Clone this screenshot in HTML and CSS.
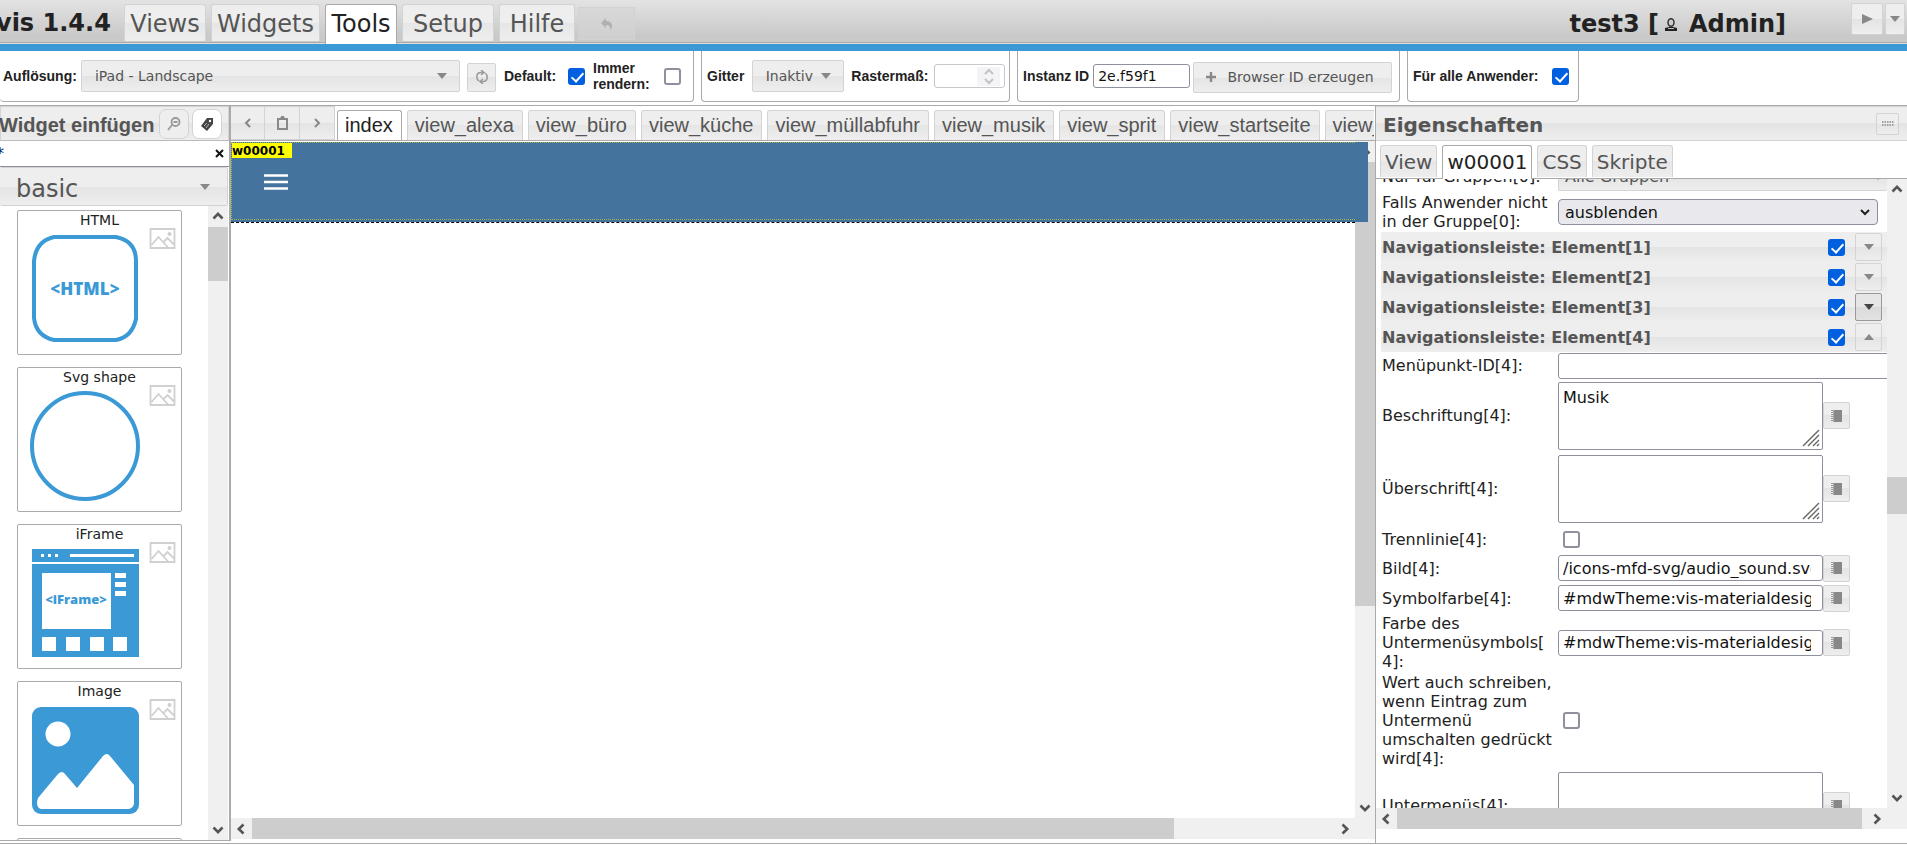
FILE: index.html
```html
<!DOCTYPE html>
<html lang="de">
<head>
<meta charset="utf-8">
<title>vis 1.4.4</title>
<link rel="stylesheet" href="styles.css">
</head>
<body>
<svg class="defs" aria-hidden="true">
  <symbol id="up" viewBox="0 0 12 12"><path d="M1.500 8.500 6 3.800l4.500 4.700" fill="none" stroke="#555" stroke-width="2.600"/></symbol>
  <symbol id="down" viewBox="0 0 12 12"><path d="M1.500 3.500 6 8.200l4.500-4.700" fill="none" stroke="#555" stroke-width="2.600"/></symbol>
  <symbol id="left" viewBox="0 0 12 12"><path d="M8.500 1.500 3.800 6l4.700 4.500" fill="none" stroke="#555" stroke-width="2.600"/></symbol>
  <symbol id="right" viewBox="0 0 12 12"><path d="M3.500 1.500 8.200 6l-4.700 4.500" fill="none" stroke="#555" stroke-width="2.600"/></symbol>
  <symbol id="tri" viewBox="0 0 10 6"><path d="M0 0h10L5 6z" fill="currentColor"/></symbol>
  <symbol id="triup" viewBox="0 0 10 6"><path d="M0 6h10L5 0z" fill="currentColor"/></symbol>
  <symbol id="pic" viewBox="0 0 26 21"><g fill="none" stroke="#d0d0d0" stroke-width="1.800"><path d="M1 1h24v19H1zM2 17l7-8 10 11M14 14l4-4 7 7"/></g><circle cx="20" cy="6" r="2" fill="#d0d0d0"/></symbol>
  <symbol id="book" viewBox="0 0 12 12"><path d="M3 0h8v12H3z" fill="#888"/><path d="M1 0v12" stroke="#999" stroke-width="2" stroke-dasharray="1 1"/><path d="M2 0h1v12H2z" fill="#aaa"/></symbol>
  <symbol id="grip" viewBox="0 0 18 18"><path d="M1 17 17 1M6 17 17 6M11 17l6-6M15 17l2-2" stroke="#666" stroke-width="1.400"/></symbol>
</svg>

<header class="menubar">
  <h1 class="brand">vis 1.4.4</h1>
  <nav class="menu">
    <button class="tab w-views">Views</button>
    <button class="tab w-widgets">Widgets</button>
    <button class="tab w-tools active">Tools</button>
    <button class="tab w-setup">Setup</button>
    <button class="tab w-hilfe">Hilfe</button>
  </nav>
  <button class="undo" aria-label="Undo" disabled><svg width="12" height="12" viewBox="0 0 12 12"><path d="M5 0v3c4 0 6 2 6 5 0 2-1 3-2 4 1-4-1-5-4-5v3L0 5z" fill="#b0b0b0"/></svg></button>
  <div class="project">test3 [<svg class="user" width="14" height="14" viewBox="0 0 14 14"><path d="M1 13v-3l4-1h4l4 1v3z" fill="#222"/><ellipse cx="7" cy="4.500" rx="3" ry="3.800" fill="#ccc" stroke="#333" stroke-width="1.500"/><path d="M4 10.500h6" stroke="#bbb"/></svg>Admin]</div>
  <div class="play">
    <button class="btn run" aria-label="Start"><svg width="11" height="10" viewBox="0 0 11 10"><path d="M0 0l11 5-11 5z" fill="#888"/></svg></button>
    <button class="btn more" aria-label="Mehr"><svg width="10" height="6"><use href="#tri"/></svg></button>
  </div>
</header>

<section class="toolbar">
  <div class="box first">
    <label for="res">Auflösung:</label>
    <button id="res" class="btn pick">iPad - Landscape<svg width="10" height="6"><use href="#tri"/></svg></button>
    <button class="btn swap" aria-label="Drehen"><svg width="12" height="14" viewBox="0 0 12 14" fill="none" stroke="#999" stroke-width="1.500"><path d="M3 11C0 9 0 3 4 2.500h3M5 0l3 2.500L5 5M9 3c3 2 3 8-1 8.500H5M7 9l-3 2.500L7 14"/></svg></button>
    <label for="def" class="lab-def">Default:</label><input id="def" type="checkbox" class="check" checked>
    <label for="ren" class="lab-ren">Immer rendern:</label><input id="ren" type="checkbox" class="check">
  </div>
  <div class="box second">
    <label for="grid">Gitter</label>
    <button id="grid" class="btn inactive">Inaktiv<svg width="10" height="6"><use href="#tri"/></svg></button>
    <label for="raster">Rastermaß:</label>
    <span class="spin"><input id="raster" type="text" disabled><svg width="23" height="19" viewBox="0 0 23 19"><path d="M0 0h23v19H0z" fill="#f4f4f6"/><path d="M8 7l4-4 4 4M8 12l4 4 4-4" fill="none" stroke="#c2c2ca" stroke-width="2"/></svg></span>
  </div>
  <div class="box third">
    <label for="inst">Instanz ID</label>
    <input id="inst" type="text" class="field inst" value="2e.f59f1">
    <button class="btn create"><svg width="10" height="10" viewBox="0 0 10 10"><path d="M5 0v10M0 5h10" stroke="#888" stroke-width="2.400"/></svg>Browser ID erzeugen</button>
  </div>
  <div class="box fourth">
    <label for="all">Für alle Anwender:</label><input id="all" type="checkbox" class="check" checked>
  </div>
</section>

<main class="work">
  <aside class="palette">
    <div class="head">
      <h2>Widget einfügen</h2>
      <button class="round" aria-label="Suche"><svg width="14" height="14" viewBox="0 0 14 14" fill="none" stroke="#999" stroke-width="1.800"><circle cx="8.500" cy="5" r="4"/><path d="M5 8l-4 5M6.500 5h4"/></svg></button>
      <button class="round on" aria-label="Filter"><svg width="14" height="14" viewBox="0 0 14 14"><path d="M7 1h6v6l-6 7-6-5z" fill="#444"/><circle cx="10" cy="4" r="1.200" fill="#fff"/><path d="M4 9l3-3M6 11l3-4" stroke="#bbb"/></svg></button>
    </div>
    <div class="search"><input type="text" value="*" aria-label="Filter"><button aria-label="Leeren"><svg width="9" height="9" viewBox="0 0 9 9"><path d="M1 1l7 7M8 1L1 8" stroke="#111" stroke-width="2"/></svg></button></div>
    <button class="btn group">basic<svg width="10" height="6"><use href="#tri"/></svg></button>
    <div class="scroller">
      <div class="cards">
        <article class="card"><h3>HTML</h3><svg class="art" viewBox="0 0 110 110"><path d="M24 3h62q20 4 20 24v58q-4 18-20 21H24Q6 102 4 84V27Q6 7 24 3z" fill="none" stroke="#3b99d6" stroke-width="4"/><text x="55" y="61" class="t-html">&lt;HTML&gt;</text></svg><svg class="pic"><use href="#pic"/></svg></article>
        <article class="card"><h3>Svg shape</h3><svg class="art" viewBox="0 0 110 110"><circle cx="55" cy="55" r="53" fill="none" stroke="#3b99d6" stroke-width="4"/></svg><svg class="pic"><use href="#pic"/></svg></article>
        <article class="card"><h3>iFrame</h3><svg class="art" viewBox="0 0 110 110"><path d="M2 1h107v13H2zM2 16h107v93H2z" fill="#3b99d6"/><path d="M12 25h69v56H12zM85 25h11v5H85zM85 34h11v5H85zM85 43h11v5H85zM12 89h14v14H12zM36 89h14v14H36zM60 89h14v14H60zM83 89h14v14H83zM40 6h64v3H40zM11 6h3v3h-3zM18 6h3v3h-3zM25 6h3v3h-3z" fill="#fff"/><text x="46" y="56" class="t-frame">&lt;iFrame&gt;</text></svg><svg class="pic"><use href="#pic"/></svg></article>
        <article class="card"><h3>Image</h3><svg class="art" viewBox="0 0 110 110"><rect x="2" y="2" width="107" height="107" rx="9" fill="#3b99d6"/><circle cx="28" cy="29" r="12.500" fill="#fff"/><path d="M8 93l20-24q4-4 7 0l12 14 26-32q4-4 7 0l24 29v19q-1 4-5 5H11q-6-2-3-11z" fill="#fff"/></svg><svg class="pic"><use href="#pic"/></svg></article>
        <article class="card"></article>
      </div>
      <div class="vbar"><svg class="ar"><use href="#up"/></svg><i class="thumb t1"></i><svg class="ar end"><use href="#down"/></svg></div>
    </div>
  </aside>

  <section class="editor">
    <div class="views">
      <div class="nav">
        <button class="btn" aria-label="Zurück"><svg width="7" height="10" viewBox="0 0 7 10"><path d="M6 1L2 5l4 4" fill="none" stroke="#888" stroke-width="2"/></svg></button>
        <button class="btn" aria-label="Ablage"><svg width="11" height="14" viewBox="0 0 11 14"><path d="M1 3h9v10H1zM3 2.500h5" fill="none" stroke="#888" stroke-width="2"/><path d="M4 0h3v2H4z" fill="#888"/></svg></button>
        <button class="btn" aria-label="Weiter"><svg width="7" height="10" viewBox="0 0 7 10"><path d="M1 1l4 4-4 4" fill="none" stroke="#888" stroke-width="2"/></svg></button>
      </div>
      <div class="vtabs">
        <button class="vtab active">index</button><button class="vtab">view_alexa</button><button class="vtab">view_büro</button><button class="vtab">view_küche</button><button class="vtab">view_müllabfuhr</button><button class="vtab">view_musik</button><button class="vtab">view_sprit</button><button class="vtab">view_startseite</button><button class="vtab">view_wetter</button>
      </div>
    </div>
    <div class="stage">
      <div class="canvas">
        <div class="navwidget">
          <span class="wid">w00001</span>
          <svg class="burger" width="24" height="16" viewBox="0 0 24 16"><path d="M0 1.500h24M0 8h24M0 14.500h24" stroke="#fff" stroke-width="2.600"/></svg>
          <span class="select-frame"></span>
        </div>
      </div>
      <div class="vbar"><svg class="ar"><use href="#up"/></svg><i class="thumb t2"></i><svg class="ar end"><use href="#down"/></svg></div>
      <div class="hbar"><svg class="ar"><use href="#left"/></svg><i class="thumb h1"></i><svg class="ar end"><use href="#right"/></svg></div>
      <div class="corner"></div>
    </div>
  </section>

  <aside class="props">
    <div class="head"><h2>Eigenschaften</h2><button class="btn dots" aria-label="Andocken"><svg width="12" height="5" viewBox="0 0 12 5"><path d="M0 1h12M0 4h12" stroke="#888" stroke-width="1.500" stroke-dasharray="1.500 1"/></svg></button></div>
    <nav class="ptabs"><button class="tab">View</button><button class="tab active">w00001</button><button class="tab">CSS</button><button class="tab">Skripte</button></nav>
    <div class="pane">
      <div class="clip">
        <table class="sheet">
          <tr class="r-grp"><td><label for="p1">Nur für Gruppen[0]:</label></td><td><button id="p1" class="btn wide">Alle Gruppen<svg width="10" height="6"><use href="#tri"/></svg></button></td></tr>
          <tr class="r-two"><td><label for="p2">Falls Anwender nicht in der Gruppe[0]:</label></td><td><span class="sel"><select id="p2"><option>ausblenden</option></select><svg width="12" height="12" viewBox="0 0 12 12"><path d="M2 4l4 4 4-4" fill="none" stroke="#222" stroke-width="2"/></svg></span></td></tr>
          <tr class="sec"><th colspan="2"><div><label for="e1">Navigationsleiste: Element[1]</label><input id="e1" type="checkbox" class="check" checked><button class="btn" aria-label="Öffnen"><svg width="10" height="6"><use href="#tri"/></svg></button></div></th></tr>
          <tr class="sec"><th colspan="2"><div><label for="e2">Navigationsleiste: Element[2]</label><input id="e2" type="checkbox" class="check" checked><button class="btn" aria-label="Öffnen"><svg width="10" height="6"><use href="#tri"/></svg></button></div></th></tr>
          <tr class="sec"><th colspan="2"><div><label for="e3">Navigationsleiste: Element[3]</label><input id="e3" type="checkbox" class="check" checked><button class="btn hover" aria-label="Öffnen"><svg width="10" height="6"><use href="#tri"/></svg></button></div></th></tr>
          <tr class="sec"><th colspan="2"><div><label for="e4">Navigationsleiste: Element[4]</label><input id="e4" type="checkbox" class="check" checked><button class="btn" aria-label="Schließen"><svg width="10" height="6"><use href="#triup"/></svg></button></div></th></tr>
          <tr class="r-id"><td><label for="p3">Menüpunkt-ID[4]:</label></td><td><input id="p3" type="text" class="field over"></td></tr>
          <tr class="r-area"><td><label for="p4">Beschriftung[4]:</label></td><td><div class="pair"><span class="area"><textarea id="p4">Musik</textarea><svg><use href="#grip"/></svg></span><button class="btn bk" aria-label="Bearbeiten"><svg width="12" height="12"><use href="#book"/></svg></button></div></td></tr>
          <tr class="r-area"><td><label for="p5">Überschrift[4]:</label></td><td><div class="pair"><span class="area"><textarea id="p5"></textarea><svg><use href="#grip"/></svg></span><button class="btn bk" aria-label="Bearbeiten"><svg width="12" height="12"><use href="#book"/></svg></button></div></td></tr>
          <tr class="r-chk"><td><label for="p6">Trennlinie[4]:</label></td><td><input id="p6" type="checkbox" class="check in"></td></tr>
          <tr class="r-one"><td><label for="p7">Bild[4]:</label></td><td><div class="pair"><input id="p7" type="text" class="field" value="/icons-mfd-svg/audio_sound.svg"><button class="btn bk" aria-label="Bearbeiten"><svg width="12" height="12"><use href="#book"/></svg></button></div></td></tr>
          <tr class="r-one"><td><label for="p8">Symbolfarbe[4]:</label></td><td><div class="pair"><input id="p8" type="text" class="field" value="#mdwTheme:vis-materialdesign"><button class="btn bk" aria-label="Bearbeiten"><svg width="12" height="12"><use href="#book"/></svg></button></div></td></tr>
          <tr class="r-three"><td><label for="p9">Farbe des Untermenüsymbols[<wbr>4]:</label></td><td><div class="pair"><input id="p9" type="text" class="field" value="#mdwTheme:vis-materialdesign"><button class="btn bk" aria-label="Bearbeiten"><svg width="12" height="12"><use href="#book"/></svg></button></div></td></tr>
          <tr class="r-five"><td><label for="p10">Wert auch schreiben, wenn Eintrag zum Untermenü umschalten gedrückt wird[4]:</label></td><td><input id="p10" type="checkbox" class="check in"></td></tr>
          <tr class="r-area"><td><label for="p11">Untermenüs[4]:</label></td><td><div class="pair"><span class="area"><textarea id="p11"></textarea><svg><use href="#grip"/></svg></span><button class="btn bk" aria-label="Bearbeiten"><svg width="12" height="12"><use href="#book"/></svg></button></div></td></tr>
        </table>
      </div>
      <div class="vbar"><svg class="ar"><use href="#up"/></svg><i class="thumb t3"></i><svg class="ar end"><use href="#down"/></svg></div>
      <div class="hbar"><svg class="ar"><use href="#left"/></svg><i class="thumb h2"></i><svg class="ar end"><use href="#right"/></svg></div>
      <div class="corner"></div>
    </div>
  </aside>
</main>
</body>
</html>
```

FILE: styles.css
```css
* { box-sizing: border-box; }
html, body { height: 100%; margin: 0; }
body {
  display: flex; flex-direction: column; overflow: hidden;
  background: #fff; color: #222;
  font: 16px/19px Verdana, "DejaVu Sans", sans-serif;
}
button, input, select, textarea { font: inherit; color: inherit; margin: 0; padding: 0; }
h1, h2, h3 { margin: 0; }
svg { display: block; flex: none; }
.defs { position: absolute; width: 0; height: 0; }

.btn {
  display: flex; align-items: center; justify-content: center;
  border: 1px solid #d3d3d3; border-radius: 2px; color: #555;
  background: linear-gradient(#eee 50%, #e4e4e4 50%, #eee);
}
.btn svg { color: #888; }
.btn.hover { border-color: #999; background: linear-gradient(#e6e6e6 50%, #dadada 50%, #e2e2e2); }
.btn.hover svg { color: #444; }
.check {
  appearance: none; position: relative; flex: none; width: 17px; height: 17px;
  border: 2px solid #8f8f9d; border-radius: 3px; background: #fff;
}
.check:checked { border-color: #0060df; background: #0060df; }
.check:checked::after {
  content: ""; position: absolute; left: 4px; top: 0; width: 5px; height: 10px;
  border: solid #fff; border-width: 0 2px 2px 0; transform: rotate(42deg);
}
.field { height: 26px; padding: 0 11px 0 4px; border: 1px solid #8f8f9d; border-radius: 3px; background: #fff; color: #111; }

/* Menu bar */
.menubar {
  flex: none; display: flex; height: 51px; padding-right: 2px;
  background: linear-gradient(#e3e3e3, #c9c9c9 36px, #cacaca 42px);
  border-bottom: 7px solid #3b99d6; box-shadow: inset 0 -1px #ddd, inset 0 -2px #aaa;
}
.brand { width: 128px; margin-left: -4px; font-size: 24px; line-height: 46px; white-space: nowrap; }
.menu { display: flex; gap: 5px; padding-top: 4px; height: 44px; }
.tab {
  border: 1px solid #d3d3d3; border-bottom: 0; border-radius: 3px 3px 0 0; color: #555;
  background: linear-gradient(#eee 50%, #e6e6e6 50%, #eee);
}
.tab.active { background: #fff; color: #222; border-color: #aaa; }
.menu .tab { height: 37px; padding-top: 2px; font-size: 24px; line-height: 35px; }
.menu .tab.active { height: 40px; padding-bottom: 3px; }
.w-views { width: 82px; }
.w-widgets { width: 109px; }
.w-tools { width: 72px; }
.w-setup { width: 92px; }
.w-hilfe { width: 76px; }
.undo {
  display: flex; align-items: center; justify-content: center; width: 57px; height: 33px;
  margin: 7px 0 0 3px; border: 1px solid #d2d2d2; background: linear-gradient(#d8d8d8, #cfcfcf);
}
.project { display: flex; align-items: center; margin-left: auto; height: 48px; padding-top: 1px; font-size: 24px; font-weight: bold; }
.user { margin: 0 11px 0 5px; }
.play { display: flex; gap: 2px; margin: 3px 0 0 65px; }
.play .btn { height: 32px; }
.run { width: 32px; }
.more { width: 20px; }

/* Toolbar */
.toolbar {
  flex: none; display: flex; gap: 7px; height: 55px; padding-bottom: 3px;
  border-bottom: 1px solid #aaa; font-size: 14px;
}
.toolbar label { font: bold 14px/16px "Liberation Sans", Arial, sans-serif; white-space: nowrap; }
.box { display: flex; align-items: center; border: 1px solid #aaa; border-top: 0; border-radius: 0 0 4px 4px; }
.first { width: 694px; padding-left: 3px; border-left: 0; }
.second { width: 309px; padding-left: 5px; }
.third { width: 383px; padding-left: 5px; }
.fourth { width: 172px; padding-left: 5px; }
.pick { flex: 1; height: 32px; margin-left: 4px; padding: 0 12px 0 13px; justify-content: space-between; }
.swap { width: 29px; height: 29px; margin: 2px 8px 0 7px; }
.lab-def { width: 64px; }
.toolbar .lab-ren { width: 71px; margin-left: 8px; white-space: normal; }
#ren { margin-right: 12px; }
.inactive { width: 92px; height: 32px; margin: 0 7px 0 8px; gap: 8px; }
.spin { display: flex; align-items: center; width: 71px; height: 24px; margin-left: auto; margin-right: 4px; border: 1px solid #c7c7ce; border-radius: 3px; }
.spin input { flex: 1; min-width: 0; height: 18px; border: 0; background: #fff; }
.spin svg { margin-right: 4px; }
.inst { width: 97px; height: 24px; margin-left: 4px; }
.create { flex: 1; height: 31px; margin: 2px 7px 0 3px; gap: 12px; padding-right: 6px; }
#all { margin-left: auto; margin-right: 9px; }

/* Work area */
.work { flex: 1; min-height: 0; display: flex; margin-bottom: 1px; border-bottom: 1px solid #aaa; }
.head {
  flex: none; display: flex; align-items: center; height: 35px;
  background: linear-gradient(#eee 50%, #e4e4e4 50%, #eee);
  border: 1px solid #d3d3d3; border-bottom: 1px solid #bbb; color: #555;
}
.ar { width: 12px; height: 12px; margin: 4px; }
.vbar, .hbar { display: flex; background: #f0f0f0; }
.vbar { flex-direction: column; width: 20px; }
.hbar { height: 21px; align-items: center; }
.vbar .end { margin-top: auto; }
.hbar .end { margin-left: auto; }
.thumb { background: #cdcdcd; flex: none; }
.t1 { height: 54px; margin-top: 1px; }
.t2 { height: 444px; margin-top: 1px; }
.t3 { height: 37px; margin-top: 278px; }
.h1 { width: 82%; height: 21px; margin-left: 1px; }
.h2 { width: 91%; height: 21px; margin-left: 1px; }

/* Palette */
.palette { flex: none; width: 231px; display: flex; flex-direction: column; border-right: 2px solid #aaa; margin-bottom: 2px; border-bottom: 1px solid #aaa; }
.palette h2 { flex: 1; margin-left: -2px; padding-top: 2px; font: bold 20px/24px "Liberation Sans", Arial, sans-serif; white-space: nowrap; }
.round { display: flex; align-items: center; justify-content: center; width: 30px; height: 30px; margin-right: 3px; border: 1px solid #d3d3d3; border-radius: 7px; background: #eee; }
.round.on { background: #fff; margin-right: 6px; }
.search { flex: none; display: flex; height: 26px; border-bottom: 1px solid #8f8f9d; }
.search input { flex: 1; min-width: 0; margin-left: -4px; border: 0; outline: 0; height: 24px; color: #0a246a; }
.search button { width: 20px; display: flex; align-items: center; justify-content: center; border: 0; background: none; }
.group { flex: none; justify-content: space-between; width: 228px; height: 39px; padding: 6px 17px 0 16px; font-size: 24px; border-left: 0; }
.group svg { margin-bottom: 6px; }
.scroller { flex: 1; min-height: 0; display: flex; justify-content: space-between; padding: 0 1px 0 17px; overflow: hidden; }
.cards { display: flex; flex-direction: column; gap: 12px; width: 165px; padding-top: 4px; }
.card { flex: none; position: relative; height: 145px; border: 1px solid #aaa; border-radius: 2px; }
.card h3 { font-size: 14px; line-height: 18px; font-weight: normal; text-align: center; }
.art { width: 110px; height: 110px; margin: 5px 0 0 12px; }
.pic { position: absolute; right: 5px; top: 17px; width: 27px; height: 21px; }
.t-html, .t-frame { font-family: "Open Sans", sans-serif; font-weight: 800; fill: #3b99d6; text-anchor: middle; }
.t-html { font-size: 17px; }
.t-frame { font-size: 13px; }

/* Editor */
.editor { flex: 1; min-width: 0; display: flex; flex-direction: column; padding-bottom: 4px; }
.views { flex: none; display: flex; height: 35px; border-bottom: 1px solid #aaa; }
.nav { display: flex; }
.nav .btn { width: 35px; height: 34px; border-radius: 0; border-left: 0; }
.nav .btn:first-child { width: 34px; }
.vtabs { display: flex; gap: 4px; margin-right: 1px; padding: 4px 0 0 2px; overflow: hidden; }
.vtab {
  flex: none; height: 30px; padding: 0 8px 2px 7px; white-space: nowrap;
  border: 1px solid #d3d3d3; border-bottom: 0; border-radius: 3px 3px 0 0; color: #555;
  background: linear-gradient(#eee 50%, #e6e6e6 50%, #eee);
  font: 20px/26px "Liberation Sans", Arial, sans-serif;
}
.vtab + .vtab { margin-left: 1px; }
.vtab.active { background: #fff; color: #222; border-color: #aaa; }
.stage { flex: 1; min-height: 0; display: grid; grid-template: 1fr 21px / 1fr 20px; }
.corner { background: #f0f0f0; }
.canvas { position: relative; }
.navwidget { position: absolute; left: 0; right: -13px; top: 1px; height: 80px; background: #44739e; }
.select-frame { position: absolute; left: 0; right: 13px; top: 0; bottom: -1px; border-bottom: 1px dashed #000; }
.select-frame::after { content: ""; position: absolute; inset: 0 0 2px 0; border: 1px dotted #a6b34a; border-right: 0; }
.wid { position: absolute; left: 1px; top: 1px; width: 60px; height: 15px; background: #ff0; color: #000; font-size: 12px; line-height: 17px; font-weight: bold; font-family: "DejaVu Sans", sans-serif; }
.burger { position: absolute; left: 33px; top: 32px; }

/* Properties */
.props { flex: none; width: 532px; display: flex; flex-direction: column; border-left: 1px solid #aaa; padding-bottom: 14px; }
.props .head { padding: 0 8px 0 7px; justify-content: space-between; border-width: 1px 0; border-bottom-color: #d3d3d3; }
.props h2 { padding-top: 4px; font-size: 20px; }
.dots { width: 23px; height: 22px; }
.ptabs { flex: none; display: flex; gap: 5px; height: 38px; padding: 4px 0 0 4px; border-bottom: 1px solid #aaa; }
.ptabs .tab { height: 32px; padding: 0 4px; font-size: 20px; line-height: 32px; }
.ptabs .active { height: 34px; padding-bottom: 2px; }
.pane { flex: 1; min-height: 0; display: grid; grid-template: 1fr 21px / 1fr 20px; }
.clip { overflow: hidden; min-width: 0; padding-left: 5px; }
.sheet { width: 506px; margin-top: -18px; border-collapse: collapse; table-layout: fixed; }
.sheet td { padding: 0; vertical-align: middle; }
.sheet td:first-child { width: 177px; padding: 0 5px 0 1px; word-break: break-word; }
.sheet th { padding: 0; text-align: left; }
.sheet label { display: block; }
.wide { width: 100%; height: 28px; justify-content: space-between; padding: 0 4px 0 6px; border-right: 0; }
.r-grp { height: 31px; }
.r-two { height: 40px; }
.sec { height: 30px; }
.sec div { display: flex; align-items: center; height: 30px; padding: 0 5px 0 1px; color: #555; background: linear-gradient(#eee 50%, #e4e4e4 50%, #eee); }
.sec label { flex: 1; }
.sec .btn { width: 27px; height: 28px; margin-left: 10px; }
.r-id { height: 27px; }
.r-area { height: 73px; }
.r-chk { height: 28px; }
.r-one { height: 30px; }
.r-three { height: 59px; }
.r-five { height: 97px; }
.sel { position: relative; display: block; width: 320px; }
.sel select { display: block; appearance: none; width: 100%; height: 26px; padding: 0 6px; border: 1px solid #8f8f9d; border-radius: 4px; background: #e9e9ed; color: #111; }
.sel svg { position: absolute; right: 7px; top: 7px; }
.over { display: block; width: 340px; }
.pair { display: flex; align-items: center; }
.pair .field { width: 265px; }
.area { position: relative; width: 265px; height: 68px; }
.area textarea { display: block; width: 100%; height: 100%; resize: none; padding: 5px 4px; border: 1px solid #8f8f9d; border-radius: 2px; background: #fff; color: #111; }
.area svg { position: absolute; right: 3px; bottom: 3px; width: 18px; height: 18px; }
.bk { width: 27px; height: 27px; }
.check.in { display: block; margin-left: 5px; }
```
